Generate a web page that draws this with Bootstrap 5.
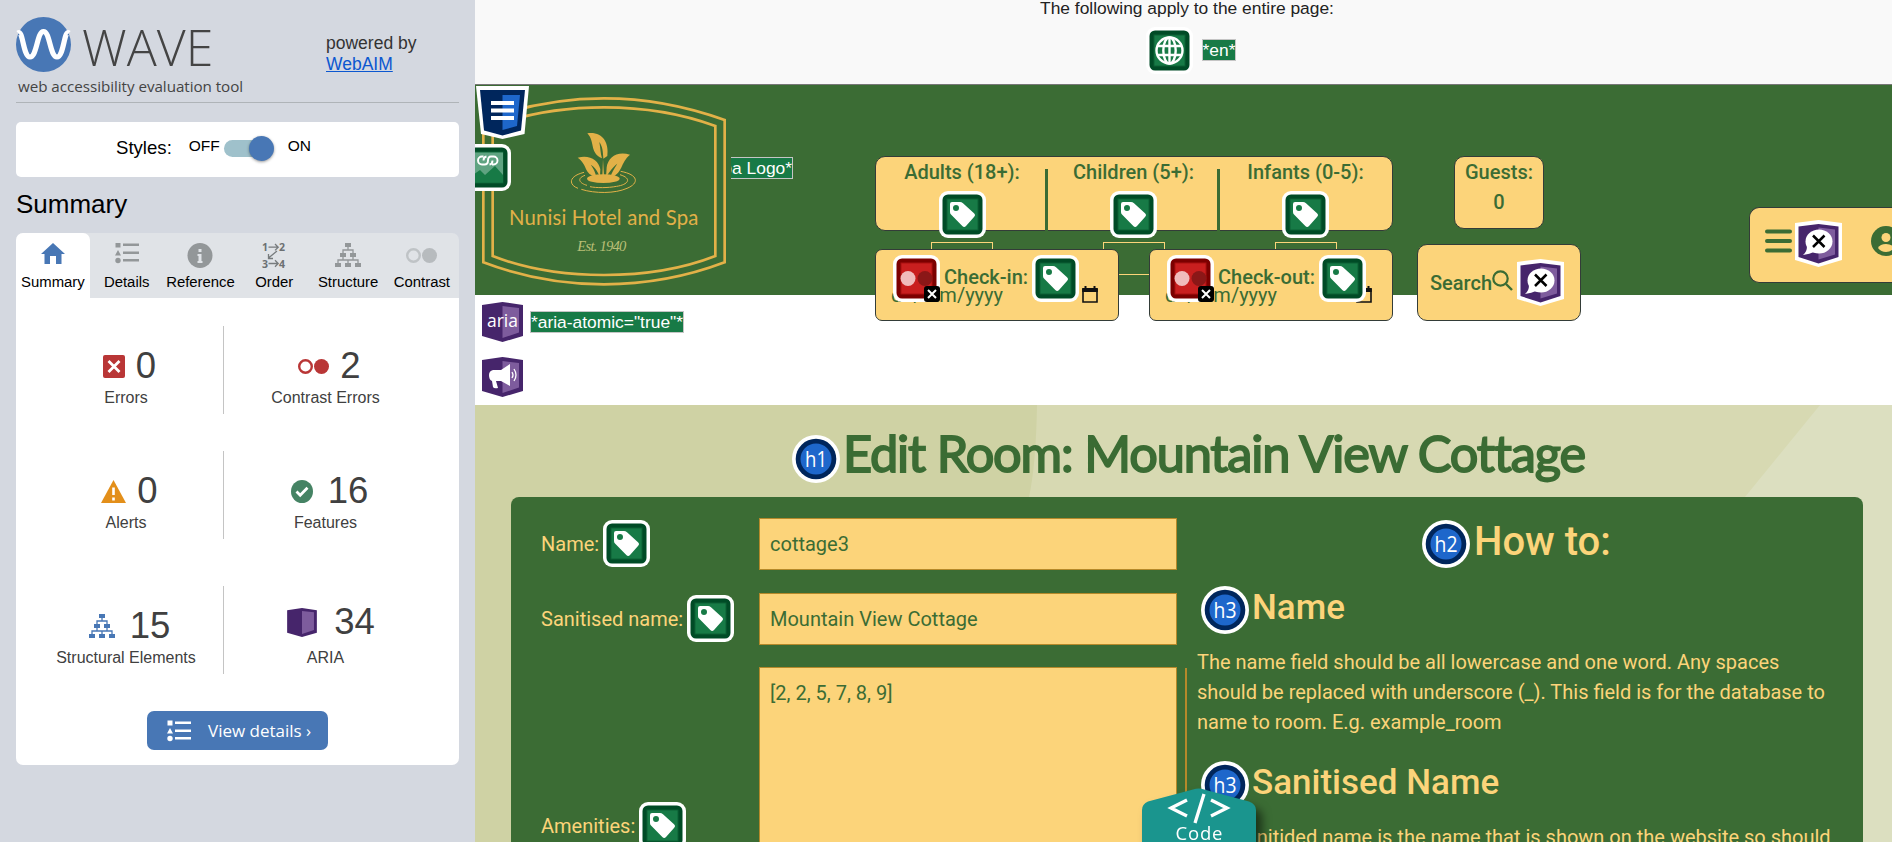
<!DOCTYPE html>
<html lang="en">
<head>
<meta charset="utf-8">
<title>WAVE - Edit Room</title>
<link rel="stylesheet" href="https://cdn.jsdelivr.net/npm/bootstrap@5.3.0/dist/css/bootstrap.min.css">
<script src="https://cdn.jsdelivr.net/npm/bootstrap@5.3.0/dist/js/bootstrap.bundle.min.js"></script>
<style>
:root{--leaf:#3b6c34;--sand:#fcd47a}
body{height:842px;font-family:Roboto,sans-serif;font-size:20px;line-height:30px;color:var(--leaf)}
svg{display:block;flex:none}
.wave{width:475px;background:#d4d8e0;padding:17px 16px 0;font-family:"Liberation Sans",sans-serif;color:#404040;line-height:normal}
.wave-head{height:86px;border-bottom:1px solid #afb4b8}
.wave-word{font:300 50px/52px "Open Sans",sans-serif;color:#444;letter-spacing:.1px;margin-left:11px}
.wave-sub{font:15.2px/20px "Open Sans",sans-serif;letter-spacing:-.04px;color:#444;white-space:nowrap;margin:3px 0 0 2px}
.powered{font-size:17.5px;line-height:21px;color:#333;margin:16px 0 0 auto;width:133px}
.powered a{color:#0b57d0}
.styles-card{height:55px;margin-top:19px;border-radius:5px;color:#000;padding:15px 0 0 100px}
.styles-label{font-size:18.6px;margin-right:17px}
.styles-state{font-size:15.5px}
.switch{width:50px;height:17px;margin:3px 14px 0 4px}
.track{width:40px;height:17px;border-radius:9px;background:#9fc1cb}
.knob{width:25px;height:25px;top:-4px;left:25px;background:#4877b5;box-shadow:0 1px 3px #0006}
.wave h2{font-size:26px;line-height:30px;color:#000;margin:12px 0 14px 0}
.wave-tabs{height:65px;border-radius:7px 7px 0 0;background:#e0e3e7;color:#000;font-size:14.9px}
.wave-tab{width:73.8px;padding-top:10px;line-height:17px}
.wave-tab svg{height:26px;margin-bottom:5px;color:#939799}
.wave-tab.current{background:#fff;border-radius:7px 7px 0 0}
.wave-panel{height:467px;border-radius:0 0 7px 7px;padding-top:28px}
.stat-row{height:88px;margin-bottom:37px}
.stat-row.last{margin:47px 0 37px}
.stat{width:208px;padding-top:19px;font-size:16px;line-height:18px}
.stat.first{border-right:1px solid #c4c4c4}
.stat-l{padding-left:13px}.stat-r{padding-right:6px;width:209px}
.stat b{font-weight:400;font-size:36.5px;line-height:42px}
.stat div{height:42px;margin-bottom:2px;gap:11px}
.stat-l div{padding-left:7px}
.stat-r div{padding-left:8px}
.stat .raised{gap:17px;padding-left:11px;margin:-4px 0 6px}
.details-btn{width:181px;height:39px;border-radius:7px;background:#4877b5;font:17px/24px "Open Sans",sans-serif;color:#fff;border:0;gap:17px;white-space:nowrap}
.pane{width:1417px;height:842px}
.page-bar{height:85px;background:#f9f9f9;border-bottom:1px solid #777;font:17.4px/16px "Liberation Sans",sans-serif;color:#222;padding-left:7px}
.lang-row{padding:11px 0 0 8px;gap:9px}
.tagtext{background:#177a46;border:1px solid #c5c5c5;color:#fff;font:17.4px/20px "Liberation Sans",sans-serif;height:22px;white-space:nowrap}
.lang-row .tagtext{margin-bottom:2px}
.site-head{height:210px;background:var(--leaf)}
.brand{width:256px;height:210px}
.logo-alt{width:62px;margin-top:72px;border-left:0;flex:none}
.booking{margin:71px 0 0 82px;width:518px}
.sandbox{background:var(--sand);border:1px solid #333c38;border-radius:10px;font-weight:500}
.guests{height:75px}
.guest{width:171px;padding-top:1px;line-height:28px}
.guest+.guest{padding-right:1px}
.guest>span{margin-bottom:5px}
.guest+.guest::before{content:"";position:absolute;left:-3px;top:12px;width:3px;height:62px;background:var(--leaf)}
.num{width:62px;height:33px;border:1px solid var(--sand);margin-top:4px;position:relative;z-index:0}
.dates{margin-top:18px;position:relative;z-index:1}
.datebox{width:244px;height:72px;border-radius:7px;padding:5px 0 0 17px}
.datebox .hint{position:absolute;left:15px;top:30px;font-weight:400}
.date-label{margin:7px 0 0 4px}
.cal{position:absolute;top:36px;left:206px}
.xbadge{position:absolute;right:0;bottom:0}
.side-search{margin:71px 0 0 24px}
.total{width:90px;height:73px;margin-left:37px}
.search{width:164px;height:77px;margin-top:15px;padding:0 0 0 12px}
.menu-box{margin:122px 0 0 168px;width:160px;height:76px;border-right:0;border-radius:10px 0 0 10px;padding-left:15px;flex:none}
.live{height:110px;padding:6px 0 0 5px}
.room{height:437px;background:#d7d9b2;position:relative;isolation:isolate}
.room>.facets{position:absolute;inset:0;z-index:-1}
.room h1{font:400 50.5px/60px Lato,sans-serif;-webkit-text-stroke:1.8px var(--leaf);letter-spacing:-1.15px;margin:0;color:var(--leaf);white-space:nowrap}
.title-row{height:92px;padding:18px 0 0 315px}
.form-card{background:var(--leaf);color:var(--sand);margin:0 29px 0 36px;height:345px;border-radius:8px 8px 0 0;padding:22px 0 0 30px;overflow:hidden}
.form-line{height:50px;margin-bottom:24px}
.form-line:first-child{margin:-1px 0 25px}
.field-label{width:218px;height:51px;gap:4px}
.field{width:418px;background:var(--sand);border:1px solid #b5892a;color:var(--leaf);border-radius:0;font-size:20px;line-height:30px;padding:10px;height:52px}
.area{height:190px}
.sep{width:2px;background:#b5892a;margin:149px 10px 0 8px}
.help h2,.help h3{font-weight:500;margin:-5px 0 0}
.help h2{font-size:40px}.help h3{font-size:35px}
.help p{margin:0;white-space:nowrap;height:90px}
.help-top{padding-left:225px;height:50px;gap:4px}
.help-sub{margin:16px 0 12px 4px;height:50px;gap:3px}
.help-sub.second{margin:23px 0 12px 4px}
.code-tab{left:663px;top:788px;filter:drop-shadow(6px 7px 5px #0008)}
</style>
</head>
<body class="d-flex overflow-hidden m-0">
<svg width="0" height="0" class="position-absolute" aria-hidden="true">
<symbol id="box" viewBox="0 0 47 47"><rect width="47" height="47" rx="9" fill="#fff"/><rect x="3.500" y="3.500" width="40" height="40" rx="5.500" fill="#004b26"/><rect x="8" y="8" width="31" height="31" fill="#177a46" stroke="#0c6035"/></symbol>
<symbol id="tag" viewBox="0 0 47 47"><use href="#box"/><path fill="#fff" fill-rule="evenodd" d="M11 13q0-2 2-2h8q1.500 0 3 1.200l11 10q2 1.800 0 3.700l-8 9q-1.800 2-3.700 0L12 23.500q-1-1-1-2.500zM17 14a3 3 0 1 0 0 6 3 3 0 0 0 0-6"/></symbol>
<symbol id="globe" viewBox="0 0 47 47"><use href="#box"/><g fill="none" stroke="#fff" stroke-width="2.400"><circle cx="23.500" cy="23.500" r="13"/><ellipse cx="23.500" cy="23.500" rx="6.200" ry="13"/><path d="M12 19h23M12 28h23M23.500 10.500v26"/></g></symbol>
<symbol id="red" viewBox="0 0 47 47"><rect width="47" height="47" rx="9" fill="#fff"/><rect x="3.500" y="3.500" width="40" height="40" rx="5.500" fill="#7c0000"/><rect x="8" y="8" width="31" height="31" fill="#c91f1f" stroke="#aa1010"/><circle cx="15" cy="23.500" r="7.500" fill="#f0bcbc"/><circle cx="32" cy="23.500" r="7.500" fill="#8b1717"/></symbol>
<symbol id="xb" viewBox="0 0 16 16"><rect width="16" height="16" rx="3" fill="#000"/><path d="M4 4l8 8M12 4l-8 8" stroke="#fff" stroke-width="2"/></symbol>
<symbol id="ring" viewBox="0 0 48 48"><circle cx="24" cy="24" r="24" fill="#fff"/><circle cx="24" cy="24" r="20.300" fill="#00265c"/><circle cx="24" cy="24" r="15.500" fill="#1e67cb"/></symbol>
<symbol id="cube" viewBox="0 0 41 40"><path fill="#46256b" d="M0 3L20.500 0 41 3v31L20.500 40 0 34z"/><path fill="#7e5c9d" d="M20.500 4L37 6v24.500L20.500 36z"/></symbol>
<symbol id="desc" viewBox="0 0 47 47"><path fill="#fff" d="M0 3L23.500 0 47 3v37L23.500 47 0 40z"/><path fill="#46256b" d="M3.500 6.500L23.500 4l20 2.500v30.500L23.500 43.500l-20-6.500z"/><path fill="#7e5c9d" d="M23.500 7.500l16.500 2v25l-16.500 5z"/><ellipse cx="24" cy="21.500" rx="13.500" ry="12" fill="#fff"/><path d="M12 26q0 6-4 9 7-1 11-3z" fill="#fff"/><path d="M18 15.500l11.500 11.500M29.500 15.500L18 27" stroke="#000" stroke-width="2.500"/></symbol>
<symbol id="calendar" viewBox="0 0 16 17"><path d="M1 3.500h14v12.500H1z" fill="none" stroke="#111" stroke-width="1.600"/><path d="M.2 2h15.600v4H.2zM2.500 0h2v3h-2zM11.500 0h2v3h-2z" fill="#111"/></symbol>
<symbol id="list" viewBox="0 0 24 22"><path fill="currentColor" d="M.5.500h5v5h-5zM0 13.500l3-5.500 3 5.500z"/><circle cx="3" cy="18.500" r="2.700" fill="currentColor"/><path fill="currentColor" d="M8 1.500h16V4H8zM8 9.500h16V12H8zM8 17h16v2.500H8z"/></symbol>
<symbol id="tree" viewBox="0 0 26 24"><path fill="currentColor" d="M10 0h6v4h-6zM5 10h6v4H5zM15 10h6v4h-6zM0 20h6v4H0zM10 20h6v4h-6zM20 20h6v4h-6z"/><path fill="none" stroke="currentColor" stroke-width="1.300" d="M13 3v4M8 10V7h10v3M8 13v4M18 13v4M3 20v-3h20v3M13 17v3"/></symbol>
</svg>

<aside class="wave flex-shrink-0">
  <header class="wave-head d-flex">
    <div>
      <div class="d-flex">
        <svg width="55" height="55" viewBox="0 0 55 55"><circle cx="27.500" cy="27.500" r="27.500" fill="#4877b5"/><path d="M2 16C7 12 7 40 14 40S21 14.500 27.500 14.500 34 40 41 40 48 12 53 16" fill="none" stroke="#fff" stroke-width="5.200"/></svg>
        <span class="wave-word mt-1">WAVE</span>
      </div>
      <div class="wave-sub">web accessibility evaluation tool</div>
    </div>
    <div class="powered">powered by<br><a href="#">WebAIM</a></div>
  </header>

  <div class="styles-card bg-white d-flex align-items-start">
    <span class="styles-label">Styles:</span>
    <span class="styles-state">OFF</span>
    <span class="switch position-relative"><span class="track d-block"></span><span class="knob position-absolute rounded-circle"></span></span>
    <span class="styles-state">ON</span>
  </div>

  <h2 class="fw-normal">Summary</h2>

  <nav class="wave-tabs d-flex text-center">
    <div class="wave-tab current"><svg class="mx-auto" width="24" height="26" viewBox="0 0 24 26"><path fill="#4877b5" d="M12 0l12 11h-3.500v10H15v-8H9v8H3.500V11H0z"/></svg>Summary</div>
    <div class="wave-tab"><svg class="mx-auto" width="24" height="26"><use href="#list" width="24" height="22" y="-1"/></svg>Details</div>
    <div class="wave-tab"><svg class="mx-auto" width="26" viewBox="0 0 26 26"><circle cx="13" cy="12.500" r="12.500" fill="#939799"/><path d="M10.500 11h4v7h1v2h-5v-2h1v-5h-1zM11.500 6h3v3h-3z" fill="#e0e3e7"/></svg>Reference</div>
    <div class="wave-tab"><svg class="mx-auto" width="26" viewBox="0 0 26 26"><g font-family="Open Sans" font-weight="700" font-size="10.500" fill="#6c7072"><text x="1" y="8">1</text><text x="18" y="8">2</text><text x="1" y="24.500">3</text><text x="18" y="24.500">4</text></g><path d="M7.500 4.200h9.500M14 1l3.200 3.200L14 7.400M7.500 20.500h9.500M14 17.300l3.200 3.200-3.200 3.200M16 8l-8.500 7M7.500 11v4.500h4.500" stroke="#777b7d" fill="none" stroke-width="1.300"/></svg>Order</div>
    <div class="wave-tab"><svg class="mx-auto" width="26" height="26"><use href="#tree" width="26" height="24"/></svg>Structure</div>
    <div class="wave-tab"><svg class="mx-auto" width="31" viewBox="0 0 31 26"><circle cx="7.500" cy="12.500" r="6.300" fill="none" stroke="#bfc3c6" stroke-width="2.400"/><circle cx="23.500" cy="12.500" r="7.500" fill="#b7bbbe"/></svg>Contrast</div>
  </nav>

  <section class="wave-panel bg-white">
    <div class="stat-row d-flex text-center">
      <div class="stat stat-l first"><div class="d-flex justify-content-center align-items-center"><svg width="22" height="23" viewBox="0 0 22 23"><rect width="22" height="23" rx="2" fill="#b93636"/><path d="M5.500 6l11 11M16.500 6l-11 11" stroke="#fff" stroke-width="2.800"/></svg><b>0</b></div>Errors</div>
      <div class="stat stat-r"><div class="d-flex justify-content-center align-items-center"><svg width="31" height="15" viewBox="0 0 31 15"><circle cx="7.500" cy="7.500" r="6.300" fill="none" stroke="#b93636" stroke-width="2.400"/><circle cx="23.500" cy="7.500" r="7.500" fill="#b93636"/></svg><b>2</b></div>Contrast Errors</div>
    </div>
    <div class="stat-row d-flex text-center">
      <div class="stat stat-l first"><div class="d-flex justify-content-center align-items-center"><svg width="25" height="23" viewBox="0 0 25 23"><path fill="#e38f1a" d="M12.500 0L25 23H0z"/><path stroke="#fff" stroke-width="2.600" d="M12.500 7.500v7.500M12.500 17.500V20.500"/></svg><b>0</b></div>Alerts</div>
      <div class="stat stat-r"><div class="d-flex justify-content-center align-items-center"><svg class="me-1" width="22" height="23" viewBox="0 0 22 23"><ellipse cx="11" cy="11.500" rx="11" ry="11.500" fill="#458364"/><path d="M5.500 11.500l3.700 3.700 7.300-7.500" stroke="#fff" stroke-width="2.800" fill="none"/></svg><b>16</b></div>Features</div>
    </div>
    <div class="stat-row last d-flex text-center">
      <div class="stat stat-l first"><div class="d-flex justify-content-center align-items-center"><svg class="me-1" width="26" height="24" style="color:#4877b5"><use href="#tree"/></svg><b>15</b></div>Structural Elements</div>
      <div class="stat stat-r"><div class="raised d-flex justify-content-center align-items-center"><svg width="30" height="29"><use href="#cube"/></svg><b>34</b></div>ARIA</div>
    </div>
    <button class="details-btn d-flex align-items-center mx-auto ps-3 pe-0"><svg class="ms-1" width="24" height="22"><use href="#list"/></svg>View details ›</button>
  </section>
</aside>

<main class="pane flex-shrink-0 position-relative overflow-hidden">
  <div class="page-bar text-center"><div>The following apply to the entire page:</div>
    <div class="lang-row d-flex justify-content-center align-items-center"><svg width="47" height="47"><use href="#globe"/></svg><span class="tagtext">*en*</span></div>
  </div>

  <header class="site-head d-flex align-items-start">
    <svg class="brand" viewBox="15 255 768 630">
      <g fill="none" stroke="#e2b148" stroke-width="8"><path d="M40 360Q220 295 402 295T764 360V787Q590 853 402 853T40 787z"/><path d="M68 378Q220 322 402 322T736 378V768Q590 825 402 825T68 768z"/></g>
      <g fill="#e2b148"><path d="M352 400c45-6 66 28 60 68l-12 8c-1-20-2-36-12-50 4 20 3 34 8 49-38-16-20-49-44-75zM323 473c35-10 63 7 68 35l-1 22c-10-20-15-28-28-36 11 15 14 25 17 36-38-6-25-36-56-57zM480 464c-40-12-66 9-70 38l-2 30c12-20 20-30 34-41-10 16-18 28-21 42 38-12 30-46 59-69zM399 478l3 50h-5z"/><ellipse cx="400" cy="536" rx="49" ry="13"/></g>
      <g fill="none" stroke="#e2b148" stroke-width="3"><path d="M342 517c-48 12-46 38-18 48M452 514c54 10 56 36 19 51-36 16-96 16-137 3M345 526c-28 10-14 25 6 30M450 524c38 12 24 30-10 35-26 5-62 5-80 1"/></g>
      <text x="117" y="675" font-family="Lato" font-weight="400" font-size="61" fill="#e2b148" textLength="568">Nunisi Hotel and Spa</text>
      <text x="322" y="753" font-family="Liberation Serif" font-style="italic" font-size="44" fill="#b9bf76" textLength="147">Est. 1940</text>
    </svg>
    <span class="tagtext logo-alt d-flex justify-content-end overflow-hidden">pa Logo*</span>
    <svg class="position-absolute" width="53" height="53" viewBox="0 0 53 53" style="left:1px;top:86px"><path fill="#fff" d="M0 0h53l-4.500 48L26.500 53 5 48z"/><path fill="#00265c" d="M4 4h45l-4 40.500-18.500 5L8 44.500z"/><path fill="#1e67cb" d="M26.500 9H44l-3 31-14.500 4z"/><path fill="#fff" d="M15 15h23v4H15zM15 22.500h23v4H15zM15 30h23v4H15z"/></svg>
    <svg class="position-absolute" width="36" height="47" viewBox="11 0 36 47" style="left:0;top:144px"><use href="#box" width="47" height="47"/><path fill="#5fa381" d="M9 8.500h30v24H9z"/><path fill="#177a46" d="M9 31l7-5 5 5 10-9 8 9v7.500H9z"/><path fill="none" stroke="#fff" stroke-width="1.900" d="M19.500 12.500h-1.500a4 4 0 0 0 0 8h2.500q3.500 0 3.500-4t3-4h2.500a4 4 0 0 1 0 8h-1.500M22.500 12.500q-3 .5-3 4M28.500 16.500q0 3.500-3 4"/></svg>

    <div class="booking flex-shrink-0">
      <div class="sandbox guests d-flex text-center">
        <div class="guest position-relative d-flex flex-column align-items-center flex-fill"><span>Adults (18+):</span><svg width="47" height="47"><use href="#tag"/></svg><div class="num flex-shrink-0"></div></div>
        <div class="guest position-relative d-flex flex-column align-items-center flex-fill"><span>Children (5+):</span><svg width="47" height="47"><use href="#tag"/></svg><div class="num flex-shrink-0"></div></div>
        <div class="guest position-relative d-flex flex-column align-items-center flex-fill"><span>Infants (0-5):</span><svg width="47" height="47"><use href="#tag"/></svg><div class="num flex-shrink-0"></div></div>
      </div>
      <div class="dates d-flex justify-content-between">
        <div class="sandbox datebox position-relative"><span class="hint">dd/mm/yyyy</span><svg class="cal" width="16" height="17"><use href="#calendar"/></svg>
          <div class="position-relative d-flex"><span class="position-relative"><svg width="47" height="47"><use href="#red"/></svg><svg class="xbadge" width="16" height="16"><use href="#xb"/></svg></span><span class="date-label">Check-in:</span><svg class="ms-1" width="47" height="47"><use href="#tag"/></svg></div></div>
        <div class="sandbox datebox position-relative"><span class="hint">dd/mm/yyyy</span><svg class="cal" width="16" height="17"><use href="#calendar"/></svg>
          <div class="position-relative d-flex"><span class="position-relative"><svg width="47" height="47"><use href="#red"/></svg><svg class="xbadge" width="16" height="16"><use href="#xb"/></svg></span><span class="date-label">Check-out:</span><svg class="ms-1" width="47" height="47"><use href="#tag"/></svg></div></div>
      </div>
    </div>
    <div class="side-search flex-shrink-0">
      <div class="sandbox total text-center">Guests:<br>0</div>
      <div class="sandbox search d-flex align-items-center"><span>Search</span><svg width="21" height="21" viewBox="0 0 21 21" style="margin-bottom:4px"><circle cx="8.500" cy="8.500" r="7.200" fill="none" stroke="#3b6c34" stroke-width="2.200"/><path d="M14 14l6 6" stroke="#3b6c34" stroke-width="2.400"/></svg><svg class="ms-1" width="47" height="47"><use href="#desc"/></svg></div>
    </div>
    <div class="sandbox menu-box d-flex align-items-center pb-2"><svg width="27" height="24" viewBox="0 0 27 24"><path d="M2 2.500h23M2 12h23M2 21.500h23" stroke="#3b6c34" stroke-width="4" stroke-linecap="round"/></svg><svg width="47" height="47" style="margin:4px 29px 0 3px"><use href="#desc"/></svg><svg width="30" height="30" viewBox="0 0 30 30"><circle cx="15" cy="15" r="15" fill="#3b6c34"/><circle cx="15" cy="11.500" r="4.500" fill="#fcd47a"/><path d="M7 22q2-4 8-4t8 4q-3 4-8 4t-8-4" fill="#fcd47a"/></svg></div>
  </header>

  <section class="live bg-white">
    <div class="d-flex align-items-center"><svg width="45" height="42" viewBox="-2 -1 45 42"><use href="#cube" width="41" height="40"/><text x="20.500" y="25" text-anchor="middle" font-family="Open Sans" font-size="17.500" fill="#fff">aria</text></svg><span class="tagtext" style="margin-left:5px">*aria-atomic="true"*</span></div>
    <svg width="45" height="42" viewBox="-2 1 45 42" style="margin-top:13px"><use href="#cube" y="2" width="41" height="40"/><path fill="#fff" d="M7 20q0-4 4-5h8l9-6v22l-9-5h-5l2 7q-4 1-5-1l-1-6q-3-1-3-6z"/><path fill="none" stroke="#fff" stroke-width="1.300" d="M30 17q2 3 0 6M32 14q4 6 0 12"/></svg>
  </section>

  <section class="room">
    <svg class="facets" width="1417" height="437"><path fill="#cfd2a4" d="M0 0h562q-1 60-8 92l-20 345H0z"/><path fill="#dcdfc0" d="M1345 0h72v437h-72L1270 92z"/></svg>
    <div class="title-row d-flex"><svg width="48" height="48" viewBox="0 0 48 48" style="margin:12px 3px 0 2px"><use href="#ring"/><text x="24" y="32" text-anchor="middle" font-family="Open Sans" font-size="21" textLength="22" lengthAdjust="spacingAndGlyphs" fill="#fff">h1</text></svg><h1>Edit Room: Mountain View Cottage</h1></div>
    <div class="form-card d-flex">
      <div class="form-fields flex-shrink-0">
        <div class="form-line d-flex"><label class="field-label d-flex align-items-center">Name:<svg width="47" height="47"><use href="#tag"/></svg></label><div class="field">cottage3</div></div>
        <div class="form-line d-flex"><label class="field-label d-flex align-items-center">Sanitised name:<svg width="47" height="47"><use href="#tag"/></svg></label><div class="field">Mountain View Cottage</div></div>
        <div class="d-flex"><label class="field-label d-flex align-items-center" style="margin-top:133px">Amenities:<svg width="47" height="47"><use href="#tag"/></svg></label><div class="field area">[2, 2, 5, 7, 8, 9]</div></div>
      </div>
      <div class="sep flex-shrink-0"></div>
      <div class="help">
        <div class="help-top d-flex align-items-center"><svg width="48" height="48" viewBox="0 0 48 48"><use href="#ring"/><text x="24" y="32" text-anchor="middle" font-family="Open Sans" font-size="21" textLength="23" lengthAdjust="spacingAndGlyphs" fill="#fff">h2</text></svg><h2>How to:</h2></div>
        <div class="help-sub d-flex align-items-center"><svg width="48" height="48" viewBox="0 0 48 48"><use href="#ring"/><text x="24" y="32" text-anchor="middle" font-family="Open Sans" font-size="21" textLength="23" lengthAdjust="spacingAndGlyphs" fill="#fff">h3</text></svg><h3>Name</h3></div>
        <p>The name field should be all lowercase and one word. Any spaces<br>should be replaced with underscore (_). This field is for the database to<br>name to room. E.g. example_room</p>
        <div class="help-sub second d-flex align-items-center"><svg width="48" height="48" viewBox="0 0 48 48"><use href="#ring"/><text x="24" y="32" text-anchor="middle" font-family="Open Sans" font-size="21" textLength="23" lengthAdjust="spacingAndGlyphs" fill="#fff">h3</text></svg><h3>Sanitised Name</h3></div>
        <p>The sanitided name is the name that is shown on the website so should</p>
      </div>
    </div>
  </section>
  <svg class="code-tab position-absolute" width="130" height="54" viewBox="0 0 130 54"><path fill="#1a958e" d="M4 54V22q0-6 6-8.500L55 1.500q6-2 11 0l45 12q7 2.500 7 8.500v32z"/><path d="M49 12L33 20l16 8M73 12l16 8-16 8M66 6L57 35" fill="none" stroke="#fff" stroke-width="3.300"/><text x="61" y="52" text-anchor="middle" font-family="Open Sans" font-size="18.500" fill="#fff" textLength="47">Code</text></svg>
</main>
</body>
</html>
